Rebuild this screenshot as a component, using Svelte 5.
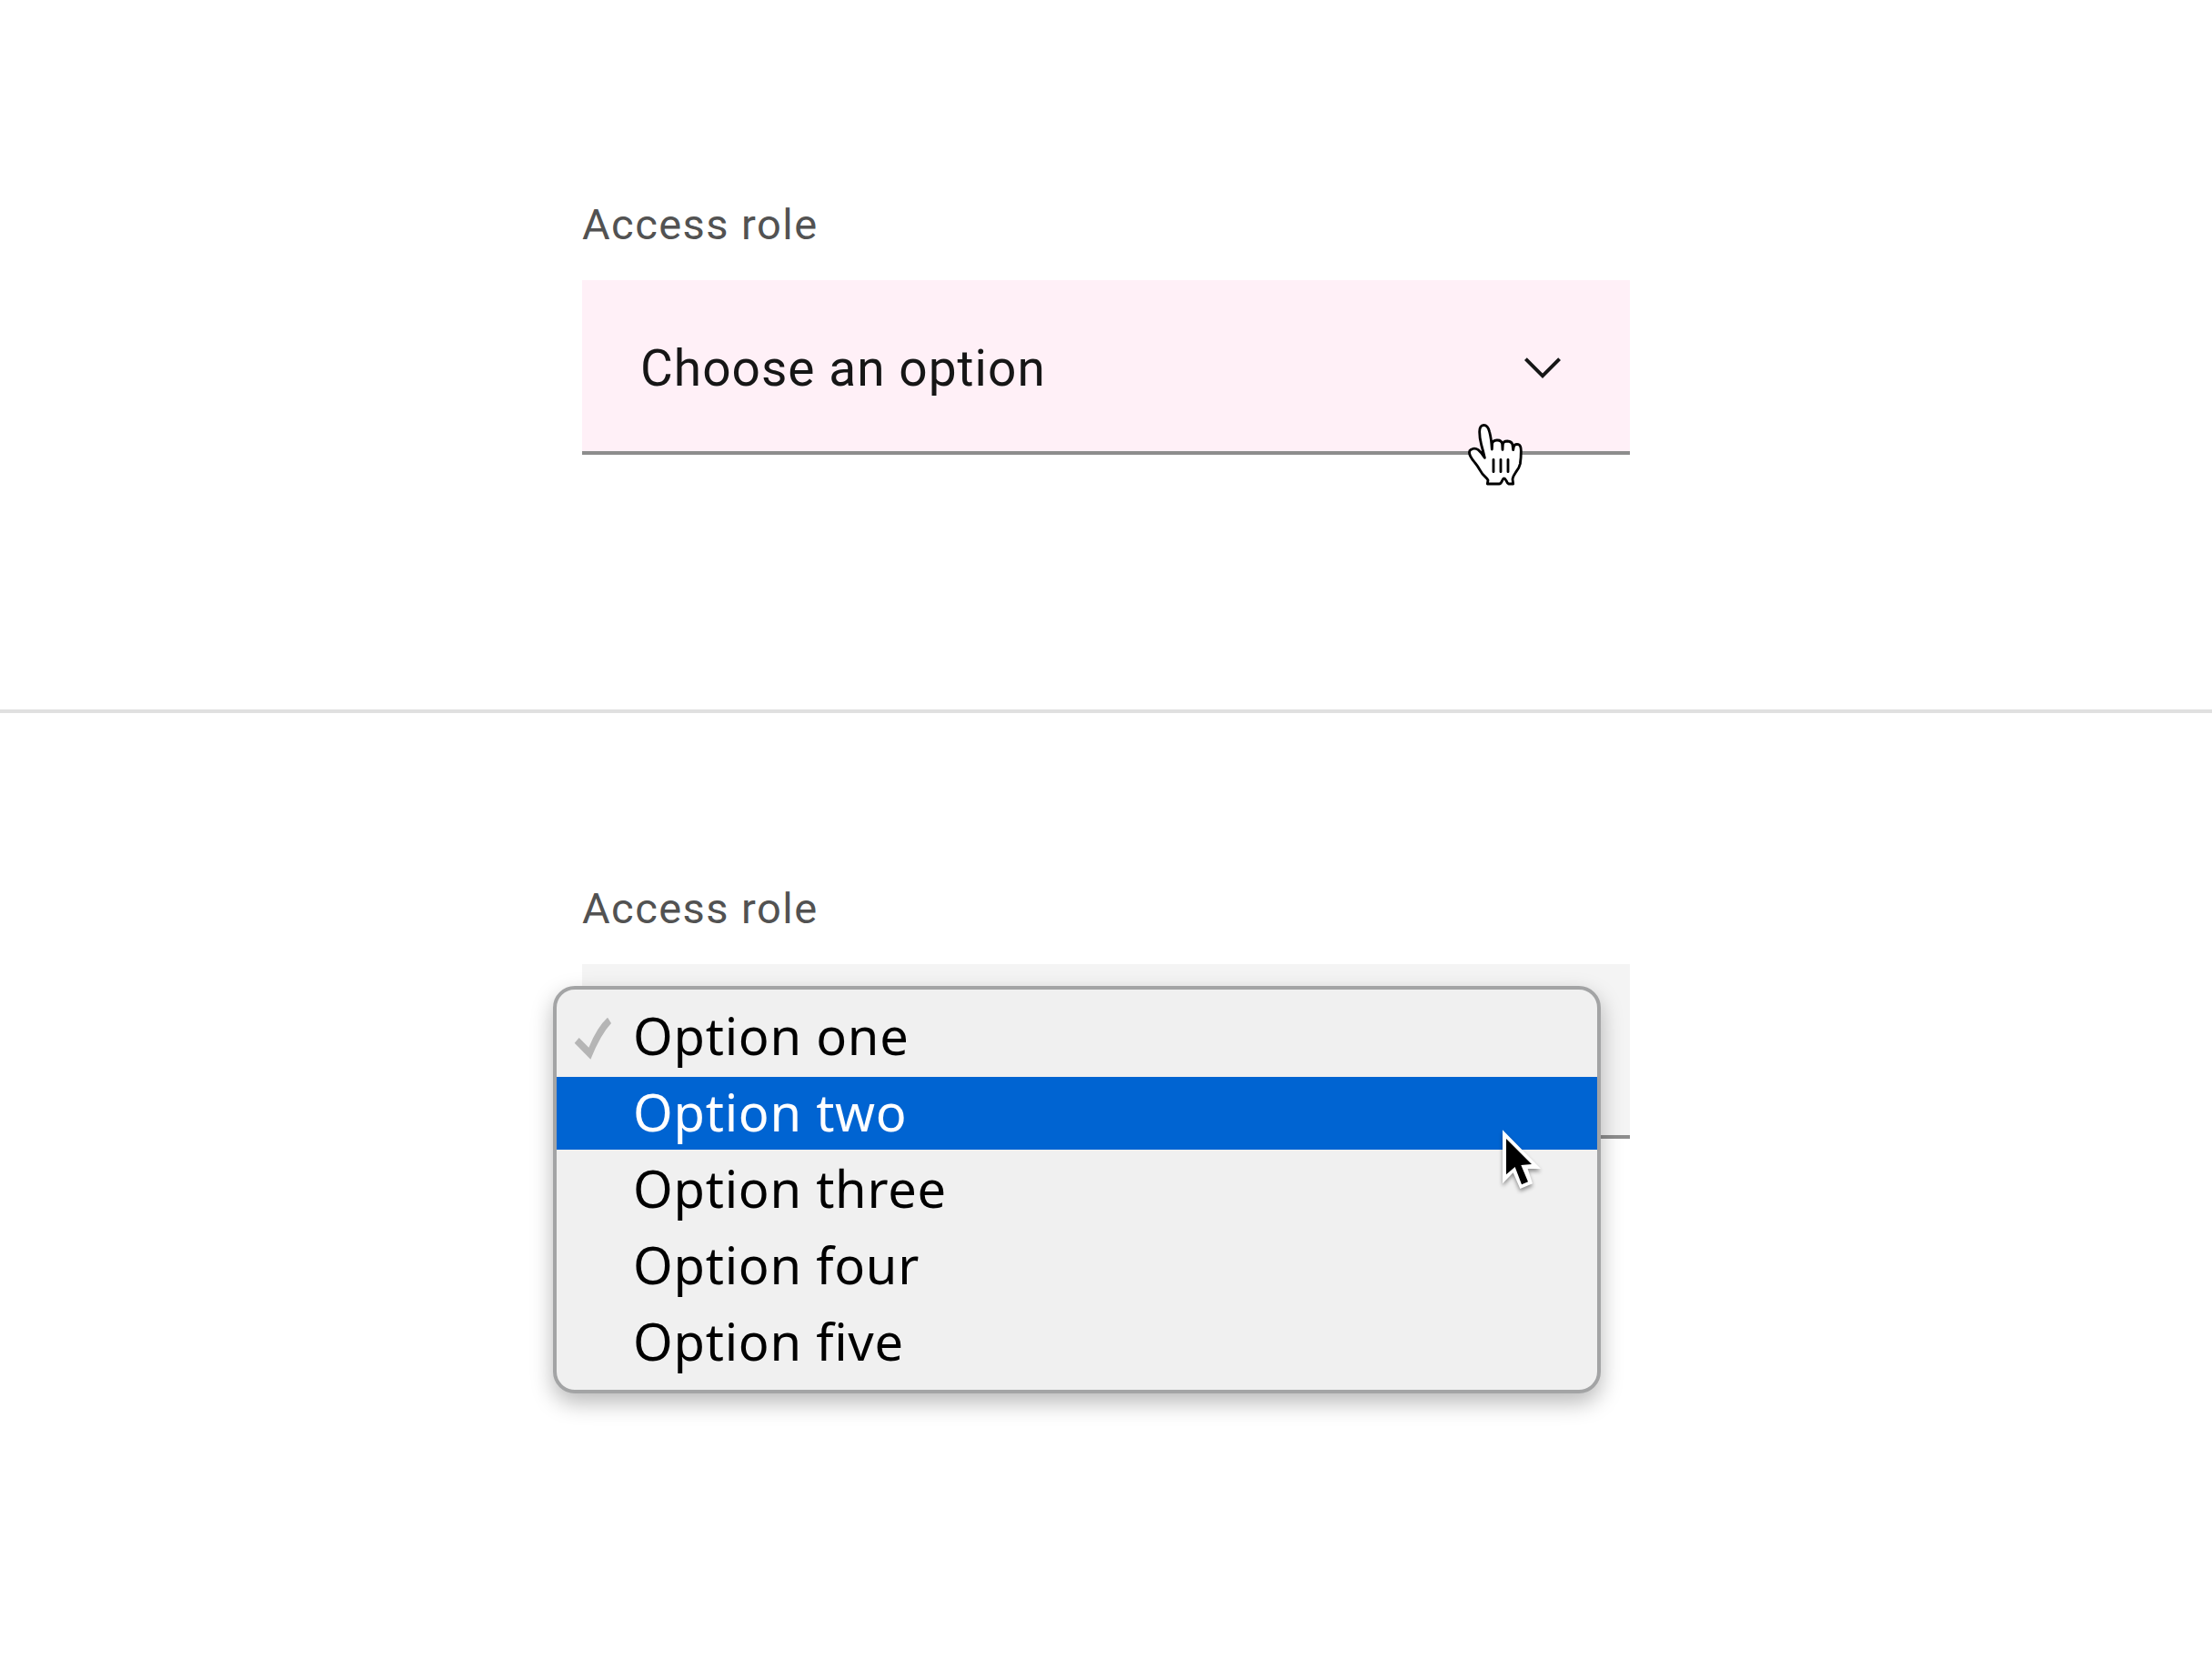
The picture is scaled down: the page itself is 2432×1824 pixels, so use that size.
<script>
  const label = 'Access role';
  const options = ['Option one', 'Option two', 'Option three', 'Option four', 'Option five'];
  const checked = 0;
  const highlighted = 1;
</script>

<main>
  <section class="top">
    <div class="field">
      <span class="label">{label}</span>
      <div class="select hover">
        <span class="value">Choose an option</span>
        <svg class="chevron" viewBox="0 0 16 16"><path d="M8 11 3 6l.7-.7L8 9.6l4.3-4.3.7.7z" /></svg>
        <svg class="hand" viewBox="69 285 186 210">
          <path
            d="M136 486 L138 474 Q136 469 130 464 Q119 455 111 440 Q104 427 94 415 Q85 405 80 395 Q72 378 82 373 Q93 365 106 374 Q116 382 127 400 Q122 378 116 357 Q110 334 110 314 Q110 293 124 292 Q138 292 143 315 Q149 337 151 372 L152 353 Q153 343 167 342 Q183 341 185 355 L186 373 L187 356 Q188 345 202 345 Q217 346 219 358 L221 374 L223 363 Q226 354 238 356 Q247 359 247 377 Q247 402 244 420 Q241 434 230 447 Q221 460 219 470 L221 486 L206 486 Q202 484 198 475 Q194 468 191 468 Q188 468 185 475 Q180 486 175 486 Z"
          />
          <path d="M156 406V446M180 406V446M204 406V446" />
        </svg>
      </div>
    </div>
  </section>

  <section class="bottom">
    <div class="field">
      <span class="label">{label}</span>
      <div class="select">
        <ul class="menu">
          {#each options as option, i}
            <li class:highlighted={i === highlighted}>
              <span class="mark">
                {#if i === checked}
                  <svg class="check" viewBox="123 474 126 144">
                    <path d="M125 560 140 543 172 575Q199 508 234 476L246 495Q211 532 178 614Z" />
                  </svg>
                {/if}
              </span>
              <span class="name">{option}</span>
            </li>
          {/each}
        </ul>
        <svg class="arrow" viewBox="144 600 150 222">
          <path class="edge" d="M156 607 282 735 239 735 255 784 214 801 191 748 156 784Z" />
          <path d="M168 636 252 720 217 723 240 778 219 787 197 729 168 754Z" />
        </svg>
      </div>
    </div>
  </section>
</main>

<style>
  :global(body) {
    margin: 0;
    background: #fff;
  }

  main {
    width: 2432px;
    height: 1824px;
    overflow: hidden;
    font-family: Roboto, 'Liberation Sans', sans-serif;
  }

  section {
    box-sizing: border-box;
    display: flex;
    justify-content: center;
  }

  .top {
    height: 784px;
    padding-top: 215px;
    border-bottom: 4px solid #e0e0e0;
  }

  .bottom {
    height: 1040px;
    padding-top: 183px;
  }

  .field {
    width: 1152px;
  }

  .label {
    display: block;
    height: 64px;
    margin-bottom: 29px;
    color: #525252;
    font-size: 47px;
    line-height: 64px;
    letter-spacing: 1.45px;
  }

  .select {
    position: relative;
    box-sizing: border-box;
    display: flex;
    align-items: center;
    justify-content: space-between;
    height: 192px;
    padding: 4px 64px 0;
    border-bottom: 4px solid #8d8d8d;
    background: #f4f4f4;
  }

  .hover {
    background: #fff0f7;
  }

  .value {
    padding-top: 2px;
    color: #161616;
    font-size: 55px;
    line-height: 72px;
    letter-spacing: 1.03px;
  }

  .chevron {
    width: 64px;
    height: 64px;
    fill: #161616;
  }

  .hand {
    position: absolute;
    left: 973px;
    top: 157px;
    width: 62px;
    height: 70px;
    fill: #fff;
    stroke: #000;
    stroke-width: 8.5;
    stroke-linecap: round;
    stroke-linejoin: round;
  }

  .menu {
    position: absolute;
    left: -32px;
    top: 24px;
    box-sizing: border-box;
    display: flex;
    flex-direction: column;
    gap: 4px;
    width: 1152px;
    height: 448px;
    margin: 0;
    padding: 12px 0;
    border: 4px solid #a3a4a5;
    border-radius: 24px;
    background: #f0f0f0;
    box-shadow: 0 10px 24px rgba(0, 0, 0, 0.28);
    list-style: none;
  }

  li {
    display: flex;
    height: 80px;
    color: #000;
    font-family: 'Noto Sans', 'Open Sans', sans-serif;
    font-size: 56px;
    line-height: 76px;
    letter-spacing: 0.75px;
  }

  .highlighted {
    background: #0064d2;
    color: #fff;
  }

  .mark {
    box-sizing: border-box;
    flex: none;
    width: 84px;
    padding: 18px 0 0 19px;
  }

  .check {
    display: block;
    width: 42px;
    height: 48px;
    fill: #b5b5b5;
  }

  .arrow {
    position: absolute;
    left: 1008px;
    top: 180px;
    width: 50px;
    height: 74px;
    overflow: visible;
    filter: drop-shadow(0 3px 2px rgba(0, 0, 0, 0.4));
  }

  .edge {
    fill: #fff;
  }
</style>
